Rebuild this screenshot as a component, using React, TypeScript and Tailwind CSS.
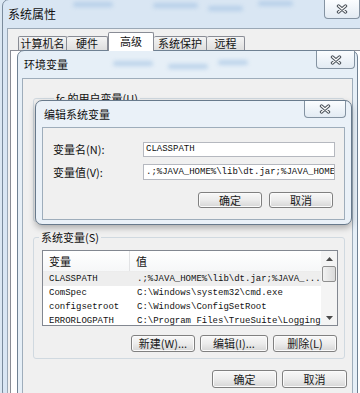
import React from "react";

function CloseBtn({ className }: { className: string }) {
  return (
    <div
      className={`absolute top-0 flex items-center justify-center rounded-b-[4px] border border-t-0 border-[#8493a2] bg-gradient-to-b from-[#fbfdff] to-[#e3ebf3] ${className}`}
    >
      <svg width="12" height="10" viewBox="0 0 12 10">
        <path d="M2.5 2 L9.5 8 M9.5 2 L2.5 8" stroke="#4f565e" strokeWidth="3.4" strokeLinecap="round" fill="none" />
        <path d="M2.5 2 L9.5 8 M9.5 2 L2.5 8" stroke="#ffffff" strokeWidth="1.2" strokeLinecap="round" fill="none" />
      </svg>
    </div>
  );
}

function Btn({ children, className }: { children: React.ReactNode; className: string }) {
  return (
    <div
      className={`flex items-center justify-center rounded-[3px] border border-[#808080] bg-gradient-to-b from-[#f8f8f8] via-[#ececec] to-[#d6d6d6] text-[11px] leading-none text-[#1a1a1a] shadow-[inset_0_0_0_1px_#fbfbfb] ${className}`}
    >
      {children}
    </div>
  );
}

function Blob({ className }: { className: string }) {
  return <div className={`absolute rounded-full bg-[#9fc0e2] opacity-60 blur-[2px] ${className}`} />;
}

const rows = [
  ["CLASSPATH", ".;%JAVA_HOME%\\lib\\dt.jar;%JAVA_..."],
  ["ComSpec", "C:\\Windows\\system32\\cmd.exe"],
  ["configsetroot", "C:\\Windows\\ConfigSetRoot"],
  ["ERRORLOGPATH", "C:\\Program Files\\TrueSuite\\Logging"],
];

export default function App() {
  return (
    <div className="relative h-[393px] w-[360px] overflow-hidden bg-[#dbe7f2] font-['Noto_Sans_CJK_SC','Noto_Sans',sans-serif] text-[#111]">
      {/* Outer window: 系统属性 */}
      <div className="absolute left-[2px] top-[-1px] flex h-[400px] w-[400px] flex-col rounded-[7px] border border-[#7a8b9c] bg-[#d9e6f3]">
        <Blob className="left-[70px] top-[2px] h-[5px] w-[40px]" />
        <Blob className="left-[150px] top-[3px] h-[5px] w-[45px]" />
        <Blob className="left-[205px] top-[6px] h-[5px] w-[35px]" />
        <Blob className="left-[255px] top-[1px] h-[5px] w-[35px]" />
        <div className="flex h-[28px] items-center pl-[5px] text-[12px] leading-none">系统属性</div>
        <CloseBtn className="left-[321px] h-[19px] w-[36px]" />
        <div className="ml-[4px] flex flex-1 flex-col border border-[#9aa8b6] bg-[#f0f0f0]">
          <div className="flex h-[21px] items-end pl-[10px]">
            <div className="flex h-[14px] w-[49px] items-center justify-center rounded-t-[2px] border border-b-0 border-[#898c95] bg-gradient-to-b from-[#f4f4f4] to-[#dedede] text-[11px] leading-none">计算机名</div>
            <div className="flex h-[14px] w-[41px] items-center justify-center rounded-t-[2px] border border-b-0 border-l-0 border-[#898c95] bg-gradient-to-b from-[#f4f4f4] to-[#dedede] text-[11px] leading-none">硬件</div>
            <div className="relative z-10 -mb-px flex h-[19px] w-[46px] items-center justify-center rounded-t-[2px] border border-b-0 border-[#898c95] bg-white pb-[2px] text-[11px] leading-none">高级</div>
            <div className="flex h-[14px] w-[53px] items-center justify-center rounded-t-[2px] border border-b-0 border-l-0 border-[#898c95] bg-gradient-to-b from-[#f4f4f4] to-[#dedede] text-[11px] leading-none">系统保护</div>
            <div className="flex h-[14px] w-[38px] items-center justify-center rounded-t-[2px] border border-b-0 border-l-0 border-[#898c95] bg-gradient-to-b from-[#f4f4f4] to-[#dedede] text-[11px] leading-none">远程</div>
          </div>
          <div className="ml-[2px] flex-1 border border-[#898c95] bg-white" />
        </div>
      </div>

      {/* 环境变量 window */}
      <div className="absolute left-[17px] top-[50px] flex h-[360px] w-[341px] flex-col rounded-t-[7px] border border-[#6f8193] bg-[#e6eff7]">
        <Blob className="left-[95px] top-[10px] h-[5px] w-[40px]" />
        <Blob className="left-[150px] top-[13px] h-[5px] w-[40px]" />
        <Blob className="left-[200px] top-[9px] h-[5px] w-[30px]" />
        <div className="flex h-[27px] items-center pb-[1px] pl-[6px] text-[11px] leading-none">环境变量</div>
        <CloseBtn className="left-[298px] h-[18px] w-[39px]" />
        <div className="mx-[4px] flex flex-1 flex-col border border-[#9eadbb] bg-[#f0f0f0] pl-[10px] pr-[7px]">
          <fieldset className="mt-[13px] h-[130px] rounded-[3px] border border-[#d0d9e0]">
            <legend className="ml-[20px] px-[2px] text-[11px] leading-[12px]">fc 的用户变量(U)</legend>
          </fieldset>
          <fieldset className="mt-[9px] flex flex-col rounded-[3px] border border-[#d0d9e0] pb-[6px]">
            <legend className="ml-[5px] px-[2px] text-[11px] leading-[12px]">系统变量(S)</legend>
            <div className="ml-[8px] mr-[6px] mt-[7px] flex h-[76px] overflow-hidden border border-[#828790] bg-white">
              <div className="flex min-w-0 flex-1 flex-col">
                <div className="flex h-[21px] shrink-0 items-center border-b border-[#ececec] bg-gradient-to-b from-[#ffffff] to-[#f6f7f8] text-[11px] leading-none">
                  <div className="flex h-full w-[87px] items-center border-r border-[#e2e3e5] pl-[6px]">变量</div>
                  <div className="pl-[6px]">值</div>
                </div>
                {rows.map((r, i) => (
                  <div
                    key={r[0]}
                    className={`flex h-[14px] shrink-0 items-center whitespace-nowrap font-['Liberation_Mono',monospace] text-[9px] leading-none ${i === 0 ? "bg-[#eeeeee]" : ""}`}
                  >
                    <div className="w-[88px] shrink-0 pl-[6px]">{r[0]}</div>
                    <div className="pl-[6px]">{r[1]}</div>
                  </div>
                ))}
              </div>
              <div className="flex w-[16px] shrink-0 flex-col items-center bg-[#f4f4f4] px-[1px]">
                <div className="flex h-[15px] w-full items-center justify-center">
                  <svg width="7" height="4" viewBox="0 0 7 4"><path d="M0 4 L3.5 0 L7 4 Z" fill="#4a4a4a" /></svg>
                </div>
                <div className="h-[16px] w-full rounded-[2px] border border-[#8f8f8f] bg-gradient-to-r from-[#f2f2f2] to-[#dadada]" />
                <div className="flex-1" />
                <div className="flex h-[15px] w-full items-center justify-center">
                  <svg width="7" height="4" viewBox="0 0 7 4"><path d="M0 0 L3.5 4 L7 0 Z" fill="#4a4a4a" /></svg>
                </div>
              </div>
            </div>
            <div className="mr-[7px] mt-[9px] flex h-[17px] justify-end gap-[5px]">
              <Btn className="w-[64px]">新建(W)...</Btn>
              <Btn className="w-[68px]">编辑(I)...</Btn>
              <Btn className="w-[64px]">删除(L)</Btn>
            </div>
          </fieldset>
          <div className="-mr-[2px] mt-[11px] flex h-[18px] justify-end gap-[5px]">
            <Btn className="w-[65px]">确定</Btn>
            <Btn className="w-[65px]">取消</Btn>
          </div>
        </div>
      </div>

      {/* 编辑系统变量 dialog */}
      <div className="absolute left-[35px] top-[100px] flex h-[125px] w-[317px] flex-col rounded-[7px] border border-[#687a8c] bg-[#eaf1f8] shadow-[0_3px_6px_rgba(0,0,0,0.28)]">
        <div className="flex h-[26px] items-center pl-[8px] text-[11px] leading-none">编辑系统变量</div>
        <CloseBtn className="left-[268px] h-[17px] w-[42px]" />
        <div className="mx-[6px] mb-[4px] flex flex-1 flex-col border border-[#9eadbb] bg-[#f0f0f0] pl-[10px] pr-[9px] pt-[14px]">
          <div className="flex h-[15px] items-center">
            <div className="w-[90px] shrink-0 text-[11px] leading-none">变量名(N):</div>
            <div className="flex h-full min-w-0 flex-1 items-center overflow-hidden whitespace-nowrap border border-[#b5b8bf] bg-white pl-[2px] font-['Liberation_Mono',monospace] text-[9px] leading-none">
              CLASSPATH
            </div>
          </div>
          <div className="mt-[7px] flex h-[16px] items-center">
            <div className="w-[90px] shrink-0 text-[11px] leading-none">变量值(V):</div>
            <div className="flex h-full min-w-0 flex-1 items-center overflow-hidden whitespace-nowrap border border-[#b5b8bf] bg-white pl-[2px] font-['Liberation_Mono',monospace] text-[9px] leading-none">
              .;%JAVA_HOME%\lib\dt.jar;%JAVA_HOME%\lib\tools.jar
            </div>
          </div>
          <div className="mt-[12px] flex h-[16px] justify-end gap-[7px] pr-[2px]">
            <Btn className="w-[64px]">确定</Btn>
            <Btn className="w-[64px]">取消</Btn>
          </div>
        </div>
      </div>
    </div>
  );
}
